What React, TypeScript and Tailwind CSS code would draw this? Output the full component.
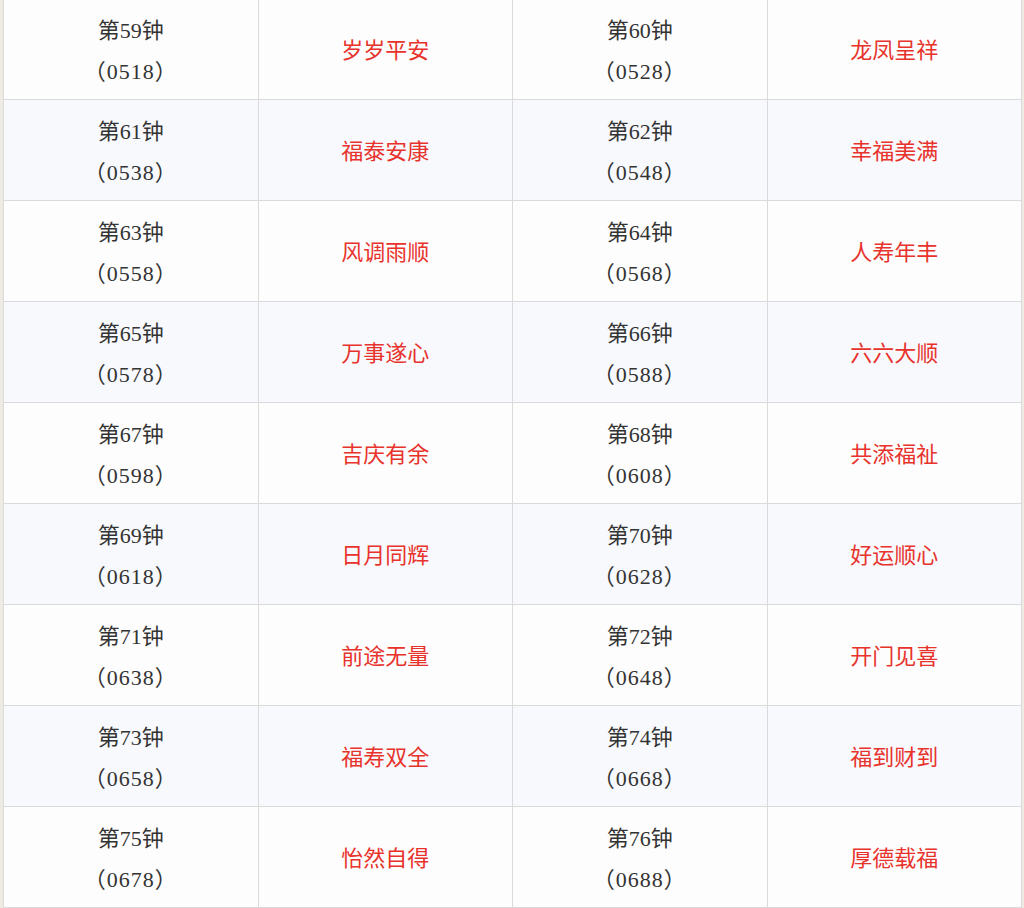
import React from 'react';

interface Bell {
  no: number;
  code: string;
  blessing: string;
}

const bells: Bell[] = [
  { no: 59, code: '0518', blessing: '岁岁平安' },
  { no: 60, code: '0528', blessing: '龙凤呈祥' },
  { no: 61, code: '0538', blessing: '福泰安康' },
  { no: 62, code: '0548', blessing: '幸福美满' },
  { no: 63, code: '0558', blessing: '风调雨顺' },
  { no: 64, code: '0568', blessing: '人寿年丰' },
  { no: 65, code: '0578', blessing: '万事遂心' },
  { no: 66, code: '0588', blessing: '六六大顺' },
  { no: 67, code: '0598', blessing: '吉庆有余' },
  { no: 68, code: '0608', blessing: '共添福祉' },
  { no: 69, code: '0618', blessing: '日月同辉' },
  { no: 70, code: '0628', blessing: '好运顺心' },
  { no: 71, code: '0638', blessing: '前途无量' },
  { no: 72, code: '0648', blessing: '开门见喜' },
  { no: 73, code: '0658', blessing: '福寿双全' },
  { no: 74, code: '0668', blessing: '福到财到' },
  { no: 75, code: '0678', blessing: '怡然自得' },
  { no: 76, code: '0688', blessing: '厚德载福' },
];

const rows: Bell[][] = [];
for (let i = 0; i < bells.length; i += 2) rows.push([bells[i], bells[i + 1]]);

const cellCls = 'border border-[#dadada] w-1/4 h-[101px] text-center align-middle px-0 pb-0 pt-[3px]';

const App: React.FC = () => {
  return (
    <div className="w-[1024px] h-[908px] overflow-hidden bg-[#eeeae4] pl-[3px] pr-[2px] font-['Liberation_Serif','Noto_Sans_CJK_SC',serif] text-[22px]">
      <table className="w-full border-collapse table-fixed -mt-[2px]">
        <tbody>
          {rows.map((pair, idx) => (
            <tr key={idx} className={idx % 2 === 0 ? 'bg-[#fdfdfd]' : 'bg-[#f7f9fd]'}>
              {pair.map(b => (
                <React.Fragment key={b.no}>
                  <td className={`${cellCls} text-[#333333] leading-[41px]`}>
                    <div>第{b.no}钟</div>
                    <div className="tracking-[1px]">（{b.code}）</div>
                  </td>
                  <td className={`${cellCls} text-[#e8322c]`}>{b.blessing}</td>
                </React.Fragment>
              ))}
            </tr>
          ))}
        </tbody>
      </table>
    </div>
  );
};

export default App;
